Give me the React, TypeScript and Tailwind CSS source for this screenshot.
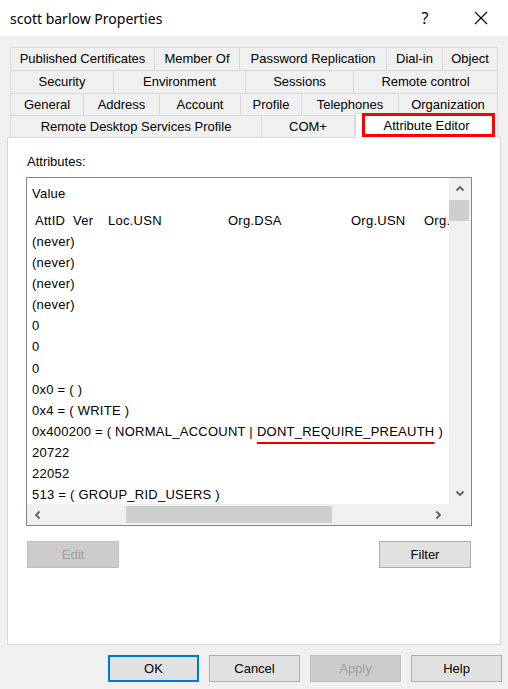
import React from 'react';

type Tab = { label: string; w: number; selected?: boolean };

const tabRows: { h: number; tabs: Tab[] }[] = [
  {
    h: 23,
    tabs: [
      { label: 'Published Certificates', w: 145 },
      { label: 'Member Of', w: 85 },
      { label: 'Password Replication', w: 147 },
      { label: 'Dial-in', w: 56 },
      { label: 'Object', w: 55 },
    ],
  },
  {
    h: 23,
    tabs: [
      { label: 'Security', w: 104 },
      { label: 'Environment', w: 132 },
      { label: 'Sessions', w: 108 },
      { label: 'Remote control', w: 144 },
    ],
  },
  {
    h: 22,
    tabs: [
      { label: 'General', w: 74 },
      { label: 'Address', w: 76 },
      { label: 'Account', w: 81 },
      { label: 'Profile', w: 61 },
      { label: 'Telephones', w: 97 },
      { label: 'Organization', w: 99 },
    ],
  },
  {
    h: 22,
    tabs: [
      { label: 'Remote Desktop Services Profile', w: 252 },
      { label: 'COM+', w: 93 },
      { label: 'Attribute Editor', w: 143, selected: true },
    ],
  },
];

const rows = [
  '(never)',
  '(never)',
  '(never)',
  '(never)',
  '0',
  '0',
  '0',
  '0x0 = (  )',
  '0x4 = ( WRITE )',
  'PREAUTH',
  '20722',
  '22052',
  '513 = ( GROUP_RID_USERS )',
];

const Chevron: React.FC<{ dir: 'up' | 'down' | 'left' | 'right' }> = ({ dir }) => {
  const rot = { up: 0, down: 180, left: 270, right: 90 }[dir];
  return (
    <svg width="10" height="10" viewBox="0 0 10 10" style={{ transform: `rotate(${rot}deg)` }}>
      <polyline points="1.5,6.5 5,3 8.5,6.5" fill="none" stroke="#606060" strokeWidth="1.8" />
    </svg>
  );
};

const Button: React.FC<{ label: string; disabled?: boolean; primary?: boolean; w?: string }> = ({
  label,
  disabled,
  primary,
  w = 'w-[91px]',
}) => (
  <div
    className={`${w} h-[27px] flex items-center justify-center ${
      disabled
        ? 'bg-[#cccccc] border border-[#bfbfbf] text-[#a0a0a0]'
        : primary
        ? 'bg-[#e1e1e1] border-2 border-[#0078d7] text-black'
        : 'bg-[#e1e1e1] border border-[#adadad] text-black'
    }`}
  >
    {label}
  </div>
);

export default function App() {
  return (
    <div
      className="w-[508px] h-[689px] bg-[#f0f0f0] flex flex-col text-[13px] text-black overflow-hidden"
      style={{ fontFamily: '"Liberation Sans", Arial, sans-serif' }}
    >
      {/* title bar */}
      <div className="h-[36px] bg-white flex items-center pl-[10px] shrink-0">
        <span className="text-[14px] flex-1" style={{ fontFamily: '"Noto Sans", sans-serif' }}>
          scott barlow Properties
        </span>
        <span className="text-[16px] w-[20px] text-center mr-[39px]" style={{ fontFamily: '"Noto Sans", sans-serif' }}>
          ?
        </span>
        <svg width="14" height="14" viewBox="0 0 14 14" className="mr-[20px]">
          <path d="M1 1 L13 13 M13 1 L1 13" stroke="#000" strokeWidth="1.1" />
        </svg>
      </div>

      {/* tabs */}
      <div className="mt-[11px] ml-[10px] flex flex-col w-[488px]">
        {tabRows.map((row, ri) => (
          <div key={ri} className="flex items-end" style={{ height: row.h }}>
            {row.tabs.map((t, ti) =>
              t.selected ? (
                <div
                  key={t.label}
                  className="relative z-10 h-[25px] -mb-px bg-white border-t border-l border-r border-[#d9d9d9] flex items-center justify-center"
                  style={{ width: t.w }}
                >
                  {t.label}
                  <div className="absolute left-[6px] right-[2px] -top-px h-[24px] border-[3px] border-[#ff0000]" />
                </div>
              ) : (
                <div
                  key={t.label}
                  className={`h-full bg-[#f0f0f0] border-t border-r border-[#d9d9d9] flex items-center justify-center ${
                    ti === 0 ? 'border-l' : ''
                  }`}
                  style={{ width: t.w }}
                >
                  {t.label}
                </div>
              )
            )}
          </div>
        ))}
      </div>

      {/* tab page */}
      <div className="ml-[7px] w-[494px] h-[508px] bg-white border border-[#d9d9d9] flex flex-col pl-[19px] pt-[16px]">
        <div className="leading-[15px]">Attributes:</div>
        <div className="mt-[8px] -ml-px w-[446px] h-[349px] border border-[#828790] flex flex-col">
          <div className="flex h-[326px]">
            <div className="w-[422px] overflow-hidden pt-[5px] leading-[21px] whitespace-nowrap tracking-[0.25px]">
              <div className="pl-[5px]">Value</div>
              <div className="mt-[6px] pl-[8px] flex">
                <span className="w-[38px] shrink-0">AttID</span>
                <span className="w-[35px] shrink-0">Ver</span>
                <span className="w-[120px] shrink-0">Loc.USN</span>
                <span className="w-[123px] shrink-0">Org.DSA</span>
                <span className="w-[73px] shrink-0">Org.USN</span>
                <span className="shrink-0">Org.</span>
              </div>
              {rows.map((r, i) => (
                <div key={i} className="pl-[5px] h-[21.1px]">
                  {r === 'PREAUTH' ? (
                    <>
                      0x400200 = ( NORMAL_ACCOUNT |{' '}
                      <span className="underline decoration-[#e00000] decoration-2 underline-offset-[6px]">
                        DONT_REQUIRE_PREAUTH
                      </span>{' '}
                      )
                    </>
                  ) : (
                    r
                  )}
                </div>
              ))}
            </div>
            {/* vertical scrollbar */}
            <div className="w-[22px] bg-[#f0f0f0] flex flex-col">
              <div className="h-[22px] flex items-center justify-center">
                <Chevron dir="up" />
              </div>
              <div className="w-[20px] h-[21px] bg-[#cdd0cd]" />
              <div className="flex-1" />
              <div className="h-[22px] flex items-center justify-center">
                <Chevron dir="down" />
              </div>
            </div>
          </div>
          {/* horizontal scrollbar */}
          <div className="h-[21px] bg-[#f0f0f0] flex">
            <div className="w-[422px] flex items-center">
              <div className="w-[22px] h-full flex items-center justify-center">
                <Chevron dir="left" />
              </div>
              <div className="ml-[77px] w-[206px] h-[17px] bg-[#cdd0cd]" />
              <div className="flex-1" />
              <div className="w-[22px] h-full flex items-center justify-center">
                <Chevron dir="right" />
              </div>
            </div>
          </div>
        </div>

        <div className="mt-[15px] w-[444px] flex justify-between">
          <Button label="Edit" disabled w="w-[92px]" />
          <Button label="Filter" w="w-[92px]" />
        </div>
      </div>

      {/* dialog buttons */}
      <div className="mt-[10px] flex justify-end gap-[10px] pr-[6px]">
        <Button label="OK" primary />
        <Button label="Cancel" />
        <Button label="Apply" disabled />
        <Button label="Help" />
      </div>
    </div>
  );
}
